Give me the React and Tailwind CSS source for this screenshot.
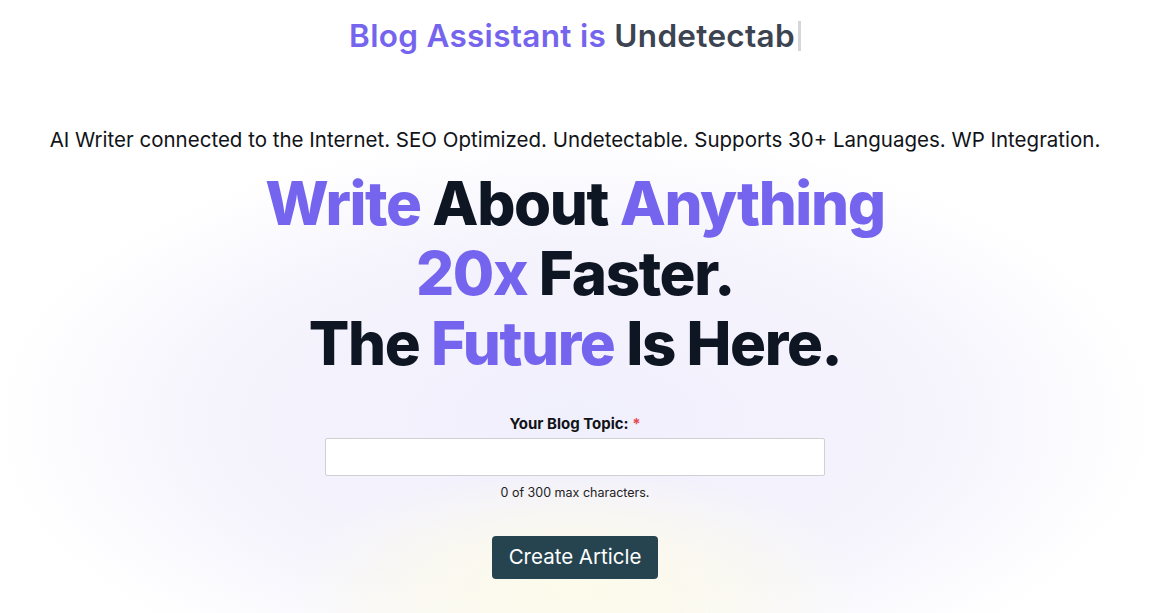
import React from "react";

export default function App() {
  return (
    <div className="relative min-h-[613px] w-full overflow-hidden bg-white font-['Inter',sans-serif]">
      {/* soft background glow */}
      <div className="pointer-events-none absolute left-[575px] top-[140px] h-[560px] w-[1140px] -translate-x-1/2 rounded-full bg-[radial-gradient(ellipse_at_center,#f0effc_0%,#f5f4fd_45%,rgba(255,255,255,0)_72%)]" />
      <div className="pointer-events-none absolute left-[575px] top-[470px] h-[240px] w-[560px] -translate-x-1/2 rounded-full bg-[radial-gradient(ellipse_at_center,#fdfbea_0%,rgba(253,251,234,0.6)_40%,rgba(255,255,255,0)_72%)]" />

      <div className="relative flex w-[1150px] flex-col items-center">
        <h2 className="mt-[16px] flex items-center text-[31.5px] font-semibold leading-[40px] tracking-[0.3px]">
          <span className="text-[#7565ee]">Blog Assistant is&nbsp;</span>
          <span className="text-[#3c4452]">Undetectab</span>
          <span className="ml-[3px] inline-block h-[30px] w-[3px] bg-[#d4d6da]" />
        </h2>

        <p className="mt-[70px] text-[20.5px] leading-[28px] text-[#111318]">
          AI Writer connected to the Internet. SEO Optimized. Undetectable. Supports 30+ Languages. WP Integration.
        </p>

        <h1 className="mt-[14px] text-center text-[60px] font-extrabold leading-[70px] tracking-[-1.4px] text-[#0f1623]">
          <span className="text-[#7565ee]">Write</span> About{" "}
          <span className="text-[#7565ee]">Anything</span>
          <br />
          <span className="text-[#7565ee]">20x</span> Faster.
          <br />
          The <span className="text-[#7565ee]">Future</span> Is Here.
        </h1>

        <label className="mt-[36px] text-[15px] font-bold leading-[20px] text-[#111318]">
          Your Blog Topic: <span className="text-[#e5484d]">*</span>
        </label>
        <input
          type="text"
          className="mt-[4px] h-[38px] w-[500px] rounded-[2px] border border-[#cfcfd4] bg-white px-3 text-[15px] outline-none"
        />
        <p className="mt-[9px] text-[12.5px] leading-[16px] text-[#222]">0 of 300 max characters.</p>

        <button className="mt-[35px] h-[43px] rounded-[4px] bg-[#25444f] px-[17px] text-[20.5px] text-white">
          Create Article
        </button>
      </div>
    </div>
  );
}
